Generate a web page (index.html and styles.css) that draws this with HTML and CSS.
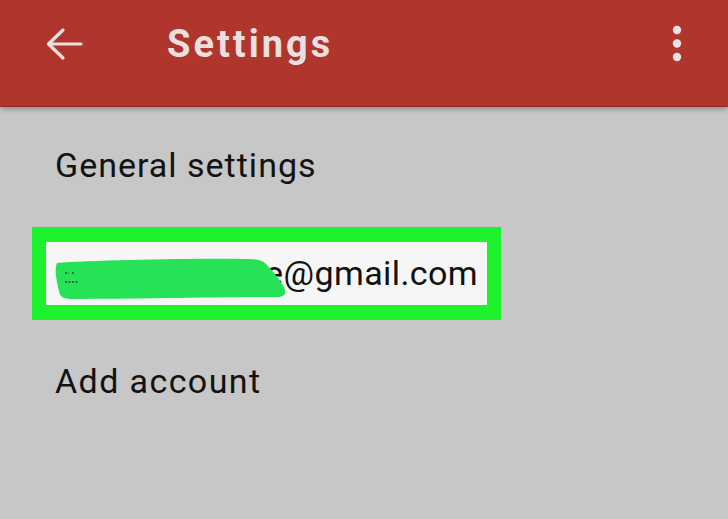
FILE: index.html
```html
<!DOCTYPE html>
<html lang="en">
<head>
    <meta charset="UTF-8">
    <title>Settings</title>
    <link rel="stylesheet" href="styles.css">
</head>
<body>
    <div class="appbar">
        <svg class="back" width="38" height="34" viewBox="0 0 38 34">
            <path d="M36 17H4M18 3L3.5 17L18 31" fill="none" stroke="#ecdfdf" stroke-width="3.2" stroke-linecap="round" stroke-linejoin="round"/>
        </svg>
        <div class="title">Settings</div>
        <svg class="more" width="10" height="38" viewBox="0 0 10 38">
            <circle cx="5" cy="5" r="4.2" fill="#e9e3e6"/>
            <circle cx="5" cy="18.5" r="4.2" fill="#e9e3e6"/>
            <circle cx="5" cy="32" r="4.2" fill="#e9e3e6"/>
        </svg>
    </div>

    <div class="list">
        <div class="item">General settings</div>

        <div class="highlight">
            <div class="account">
                namenamee@gmail.com
                <!-- redaction scribble over the user name -->
                <svg class="scribble" width="240" height="44" viewBox="0 0 240 44">
                    <path d="M4 6 C40 3 150 1 196 2 C204 2 210 4 212 6 C220 14 230 26 232 33 C233 38 230 40 224 40 C180 40 80 42 20 42 C10 42 7 40 6 34 C4 26 1 12 4 6 Z" fill="#26e257"/>
                    <path d="M12 16h4M19 16h3M12 25h14" stroke="#2b4a30" stroke-width="1.4" stroke-dasharray="2 1.5"/>
                </svg>
            </div>
        </div>

        <div class="item add">Add account</div>
    </div>
</body>
</html>
```

FILE: styles.css
```css
body {
    margin: 0;
    font-family: Roboto, "Liberation Sans", sans-serif;
    background-color: #c7c7c7;
    height: 519px;
    overflow: hidden;
}
.appbar {
    height: 107px;
    box-sizing: border-box;
    display: flex;
    align-items: center;
    padding: 0 46px 18px 45px;
    background-color: #b0362d;
    border-bottom: 1px solid #8e2a23;
    box-shadow: 0 2px 5px rgba(0, 0, 0, 0.3);
}
.back {
    flex: none;
}
.title {
    flex: 1;
    margin-left: 84px;
    font-size: 38px;
    font-weight: 700;
    color: #ebdfdf;
    letter-spacing: 3px;
}
.more {
    flex: none;
}
.list {
    padding: 38px 0 0 32px;
}
.item {
    padding-left: 23px;
    font-size: 34px;
    line-height: 40px;
    letter-spacing: 1px;
    color: #121212;
}
.highlight {
    width: 441px;
    margin-top: 42px;
    border: solid #1ef22c;
    border-width: 15px 14px;
    background-color: #f6f6f6;
}
.account {
    position: relative;
    height: 63px;
    box-sizing: border-box;
    padding: 11px 9px 0 0;
    text-align: right;
    font-size: 34px;
    line-height: 40px;
    letter-spacing: 0.4px;
    color: #111;
    white-space: nowrap;
}
.scribble {
    position: absolute;
    left: 7px;
    top: 15px;
}
.add {
    margin-top: 41px;
    letter-spacing: 1.4px;
}
```
